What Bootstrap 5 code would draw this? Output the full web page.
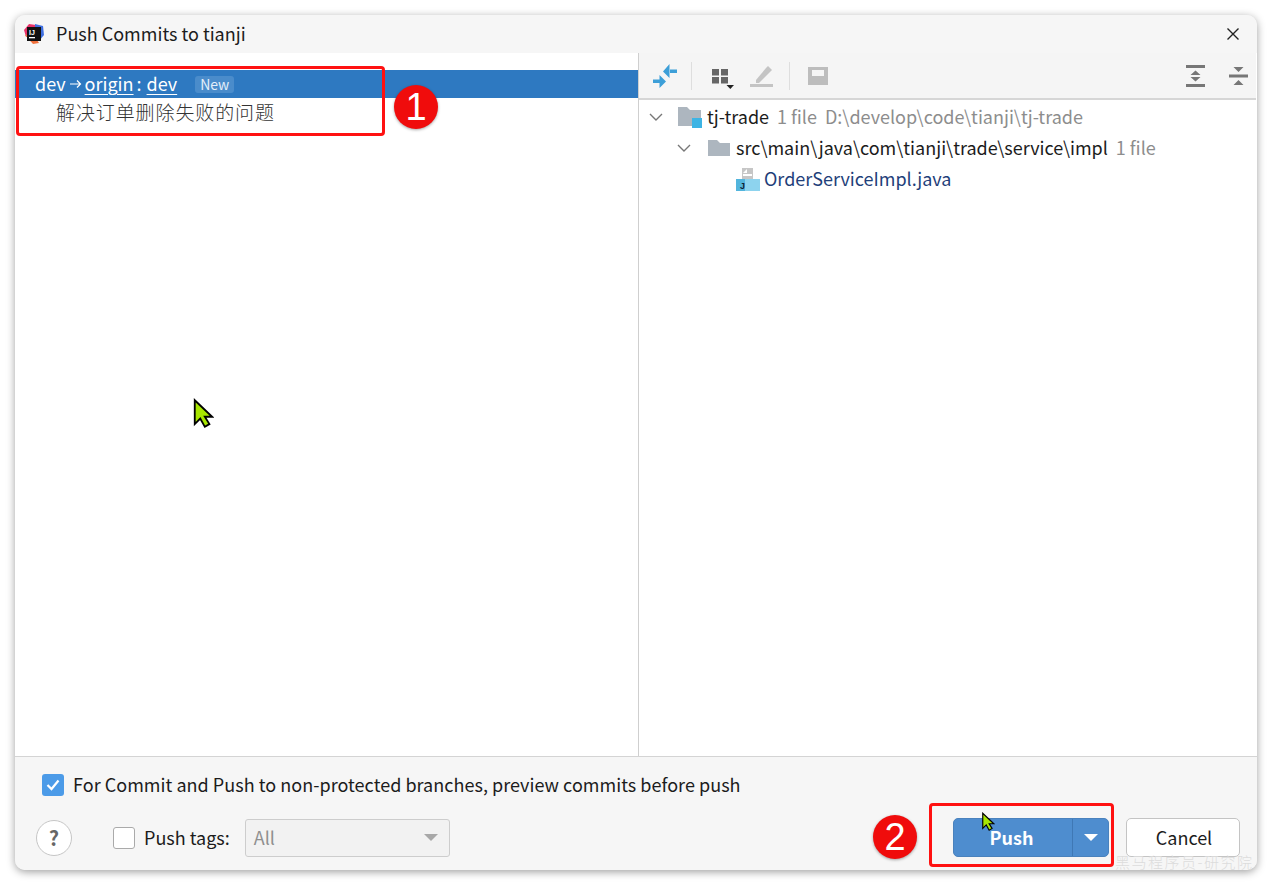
<!DOCTYPE html>
<html lang="zh">
<head>
<meta charset="utf-8">
<title>Push Commits to tianji</title>
<link href="https://cdn.jsdelivr.net/npm/bootstrap@5.3.0/dist/css/bootstrap.min.css" rel="stylesheet">
<style>
html,body{height:887px;margin:0;overflow:hidden;background:#fff;}
body{font-family:"Noto Sans CJK SC","Noto Sans",sans-serif;font-size:18px;color:#1c1c1c;line-height:1.3;position:relative;}
.win{margin:15px 15px 0 15px;width:1242px;height:855px;border-radius:10px;background:#f6f6f6;box-shadow:0 2px 9px rgba(0,0,0,.38);overflow:hidden;}
.titlebar{height:38px;padding-left:8px;background:#f6f6f6;}
.titlebar .ttl{font-size:18px;margin-left:11px;}
.closex{margin-left:auto;margin-right:17px;}
.mainarea{height:703px;background:#fff;}
.lefthalf{width:624px;border-right:1px solid #cfcfcf;padding-top:17px;}
.selrow{height:28px;background:#2e79c1;color:#fff;padding-left:20px;}
.selrow u{text-underline-offset:3px;text-decoration-thickness:1px;}
.arrowgap{margin:0 3px 0 4px;}
.colonsp{margin:0 5px 0 3px;}
.newtag{font-size:14px;background:#4a8ccb;color:#e4effa;padding:0 5px;border-radius:3px;margin-left:18px;line-height:17px;}
.commitrow{padding-left:41px;height:30px;line-height:30px;color:#333;font-size:19px;font-weight:300;letter-spacing:.9px;margin-top:-1px;}
.righthalf{width:617px;}
.tools{height:47px;background:#f5f5f5;border-bottom:2px solid #d6d6d6;padding-left:14px;padding-right:8px;}
.vsep{width:1px;height:28px;background:#dedede;}
.gapa{margin-left:14px;}
.gapb{margin-left:17px;}
.gapd{margin-left:16px;}
.gapc{margin-left:24px;}
.treerow{height:31px;font-size:18px;}
.row1{padding-left:10px;margin-top:1px;}
.row2{padding-left:38px;}
.row3{padding-left:97px;}
.lab2{margin-left:5px;}
.faded{color:#8d8d8d;}
.filelink{color:#1f3f7a;}
.bottombar{height:114px;border-top:1px solid #d4d4d4;background:#f6f6f6;padding:16px 17px 0 21px;}
.cbon{width:22px;height:22px;border-radius:3px;background:#4c9be8;margin-left:6px;}
.cboff{width:22px;height:22px;border-radius:3px;background:#fff;border:1px solid #aaa;margin-left:41px;}
.helpbtn{width:36px;height:36px;border-radius:50%;background:#fff;border:1px solid #c6c6c6;color:#666;font-weight:700;font-size:20px;}
.secondline{margin-top:22px;}
.taglabel{margin-left:9px;}
.longlabel{margin-left:9px;letter-spacing:.03px;}
.fakeselect{width:205px;height:38px;border:1px solid #cdcdcd;border-radius:3px;background:#f2f2f2;color:#8f8f8f;padding:0 11px 0 8px;margin-left:15px;}
.caretg{width:0;height:0;border-left:7px solid transparent;border-right:7px solid transparent;border-top:7px solid #a8a8a8;}
.pushgrp{width:156px;height:39px;background:#4e8dcf;border:1px solid #4a82bd;border-radius:5px;color:#fff;font-weight:700;}
.pushlabel{width:115px;}
.pushdrop{width:36px;border-left:1px solid #3f78b5;height:100%;margin-left:auto;}
.caretw{width:0;height:0;border-left:7px solid transparent;border-right:7px solid transparent;border-top:7px solid #fff;}
.cancelbtn{width:114px;height:39px;background:#fff;border:1px solid #c4c4c4;border-radius:5px;margin-left:17px;color:#1c1c1c;padding-left:2px;}
.redbox{position:absolute;border:3px solid #f11;border-radius:4px;pointer-events:none;}
.box1{left:16px;top:66px;width:369px;height:70px;}
.box2{left:929px;top:803px;width:185px;height:64px;}
.bullet{position:absolute;width:44px;height:44px;border-radius:50%;background:#f00c0c;color:#fff;font-family:"Liberation Sans",sans-serif;font-size:38px;line-height:44px;text-align:center;box-shadow:0 1px 3px rgba(0,0,0,.35);}
.b1{left:394px;top:85px;}
.b2{left:873px;top:815px;}
.cursorbig{position:absolute;left:192px;top:398px;}
.cursorsmall{position:absolute;left:981px;top:812px;}
.wmark{position:absolute;left:1115px;top:853px;font-size:15px;line-height:18px;color:#dcdcdc;letter-spacing:1.5px;font-weight:300;}
</style>
</head>
<body>
<div class="win d-flex flex-column">
  <div class="titlebar d-flex align-items-center flex-shrink-0">
    <svg width="22" height="22" viewBox="0 0 22 22"><path d="M1 7 6 1l7 1-2 8-8 4z" fill="#e8336b"/><path d="M12 1l8 2 1 9-5 6-4-8z" fill="#3f6fe0"/><path d="M2 12l8 9 6-1-6-9z" fill="#f0703c"/><rect x="4" y="4" width="14" height="14" fill="#111"/><text x="6" y="12" fill="#fff" font-size="7" font-family="Liberation Sans" font-weight="700">IJ</text><rect x="6" y="14" width="6" height="1.3" fill="#fff"/></svg>
    <span class="ttl">Push Commits to tianji</span>
    <svg class="closex" width="14" height="14" viewBox="0 0 14 14"><path d="M1.5 1.5 12.5 12.5M12.5 1.5 1.5 12.5" stroke="#222" stroke-width="1.4"/></svg>
  </div>
  <div class="mainarea d-flex flex-shrink-0">
    <div class="lefthalf flex-shrink-0">
      <div class="selrow d-flex align-items-center">
        <span>dev</span>
        <svg class="arrowgap" width="12" height="10" viewBox="0 0 12 10"><path d="M0 5h10M7 1.500 10.500 5 7 8.500" stroke="#fff" stroke-width="1.200" fill="none"/></svg>
        <u>origin</u><span class="colonsp">:</span><u>dev</u>
        <span class="newtag">New</span>
      </div>
      <div class="commitrow">解决订单删除失败的问题</div>
    </div>
    <div class="righthalf">
      <div class="tools d-flex align-items-center">
        <svg width="24" height="24" viewBox="0 0 24 24"><path d="M0 15.500h7v3.500H0zM6.500 11l6.500 6.500L6.500 24z" fill="#3d9fd8"/><path d="M16 5.500h8V9h-8zM16.500 0 10 7.500l6.500 6.500z" fill="#3d9fd8"/></svg>
        <span class="vsep gapa"></span>
        <svg class="gapb" width="26" height="26" viewBox="0 0 26 26"><g fill="#666"><rect x="3" y="6" width="7" height="6.500"/><rect x="12" y="6" width="7" height="6.500"/><rect x="3" y="14" width="7" height="6.500"/><rect x="12" y="14" width="7" height="6.500"/></g><path d="M17.500 22h7.500l-3.700 4z" fill="#222"/></svg>
        <svg class="gapa" width="26" height="26" viewBox="0 0 26 26"><g fill="#c4c4c4"><rect x="1" y="21" width="23" height="3"/><path d="M7 17 17 5l2-2 4 4-2 2-11 11H7z"/></g></svg>
        <span class="vsep gapa"></span>
        <svg class="gapb" width="22" height="22" viewBox="0 0 22 22"><path fill-rule="evenodd" d="M1 2h20v18H1zM5 5v6h12V5z" fill="#bdbdbd"/></svg>
        <svg class="ms-auto" width="19" height="22" viewBox="0 0 19 22"><g fill="#777"><rect x="0" y="0" width="19" height="3"/><rect x="0" y="19" width="19" height="3"/><path d="M9.500 5.500l5 4.500h-10zM9.500 16.500l5-4.500h-10z"/></g></svg>
        <svg class="gapc" width="19" height="20" viewBox="0 0 19 20"><g fill="#777"><rect x="0" y="8.500" width="19" height="3"/><path d="M4.500 1h10l-5 5zM4.500 19h10l-5-5z"/></g></svg>
      </div>
      <div class="treerow row1 d-flex align-items-center">
        <svg width="14" height="10" viewBox="0 0 14 10"><path d="M1 2l6 6 6-6" stroke="#777" stroke-width="1.400" fill="none"/></svg>
        <svg class="gapa" width="26" height="24" viewBox="0 0 26 24"><path d="M1 2h9l3 3h11v16H1z" fill="#adb6bf"/><rect x="15" y="13" width="10" height="10" fill="#3db4e4"/></svg>
        <span class="ms-1">tj-trade</span><span class="faded ms-2">1 file&nbsp; D:\develop\code\tianji\tj-trade</span>
      </div>
      <div class="treerow row2 d-flex align-items-center">
        <svg width="14" height="10" viewBox="0 0 14 10"><path d="M1 2l6 6 6-6" stroke="#777" stroke-width="1.400" fill="none"/></svg>
        <svg class="gapd" width="24" height="20" viewBox="0 0 24 20"><path d="M1 2h9l3 3h10v13H1z" fill="#adb6bf"/></svg>
        <span class="lab2">src\main\java\com\tianji\trade\service\impl</span><span class="faded ms-2">1 file</span>
      </div>
      <div class="treerow row3 d-flex align-items-center">
        <svg width="24" height="24" viewBox="0 0 24 24"><path d="M6 1h11v11H6z" fill="#c6c6c6"/><path d="M11 2 7 6h4z" fill="#fff"/><path d="M7 7h9v2H7z" fill="#fff"/><path d="M0 12h24v12H0z" fill="#8dd3ee"/><path d="M0 12h9v12H0z" fill="#52b5dd"/><text x="4" y="22" font-size="9" fill="#123" font-family="Liberation Sans" font-weight="700">J</text></svg>
        <span class="filelink ms-1">OrderServiceImpl.java</span>
      </div>
    </div>
  </div>
  <div class="bottombar flex-grow-1">
    <div class="d-flex align-items-center">
      <span class="cbon d-inline-flex align-items-center justify-content-center"><svg width="14" height="12" viewBox="0 0 14 12"><path d="M1.500 6 5.500 10 12.500 1.500" stroke="#fff" stroke-width="2.200" fill="none"/></svg></span>
      <span class="longlabel">For Commit and Push to non-protected branches, preview commits before push</span>
    </div>
    <div class="d-flex align-items-center secondline">
      <span class="helpbtn d-inline-flex align-items-center justify-content-center">?</span>
      <span class="cboff"></span>
      <span class="taglabel">Push tags:</span>
      <span class="fakeselect d-flex align-items-center justify-content-between"><span>All</span><span class="caretg"></span></span>
      <span class="pushgrp d-flex align-items-center ms-auto"><span class="pushlabel text-center">Push</span><span class="pushdrop d-flex align-items-center justify-content-center"><span class="caretw"></span></span></span>
      <span class="cancelbtn d-flex align-items-center justify-content-center">Cancel</span>
    </div>
  </div>
</div>
<div class="wmark">黑马程序员-研究院</div>
<div class="redbox box1"></div>
<div class="redbox box2"></div>
<div class="bullet b1">1</div>
<div class="bullet b2">2</div>
<svg class="cursorbig" width="22" height="32" viewBox="0 0 24 34"><path d="M3 2v26l6-6 5 9 5-3-5-8h8z" fill="#a8e600" stroke="#000" stroke-width="2"/></svg>
<svg class="cursorsmall" width="14" height="20" viewBox="0 0 24 34"><path d="M3 2v26l6-6 5 9 5-3-5-8h8z" fill="#a8e600" stroke="#000" stroke-width="2"/></svg>
<script src="https://cdn.jsdelivr.net/npm/bootstrap@5.3.0/dist/js/bootstrap.bundle.min.js"></script>
</body>
</html>
